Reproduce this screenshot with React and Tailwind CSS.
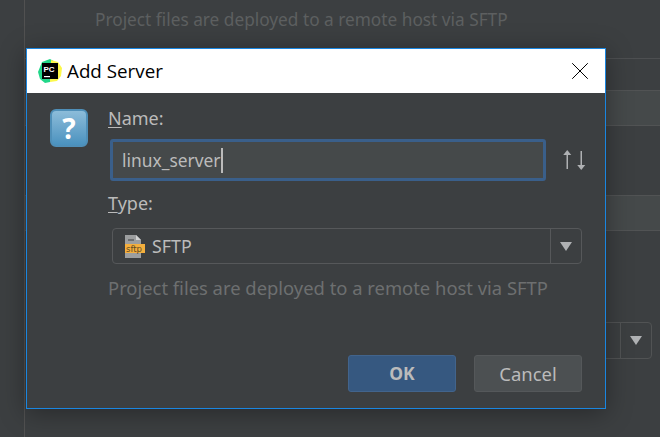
import { X } from 'lucide-react';

const font = { fontFamily: '"Noto Sans", "Open Sans", sans-serif' };

function PcLogo() {
  return (
    <svg width="24" height="24" viewBox="0 0 24 24" className="shrink-0">
      <polygon points="0,13 4,3 12,0 17,3 12,23 7,24 2,20" fill="#21d789" />
      <polygon points="13,1 20,3 24,9 23,17 19,22 12,23" fill="#fcf84a" />
      <rect x="4" y="4" width="16" height="16" fill="#000" />
      <text x="5.5" y="12.5" fontSize="8" fontWeight="700" fill="#fff" style={{ fontFamily: '"Liberation Sans", sans-serif' }}>PC</text>
      <rect x="6" y="17" width="6" height="1.2" fill="#fff" />
    </svg>
  );
}

function SftpIcon() {
  return (
    <svg width="20" height="23" viewBox="0 0 20 23" className="shrink-0">
      <path d="M0 0h11l5 5v18H0z" fill="#9c9e9f" />
      <path d="M11 0l5 5h-5z" fill="#d0d1d1" />
      <rect x="3" y="4" width="6" height="2" fill="#6b6d6e" />
      <rect x="0" y="9" width="20" height="9" fill="#f4af3d" />
      <text x="1" y="16.5" fontSize="8.5" fill="#5e4a25" style={{ fontFamily: '"DejaVu Sans", sans-serif' }}>sftp</text>
    </svg>
  );
}

function SwapArrows() {
  return (
    <svg width="24" height="20" viewBox="0 0 24 20" className="shrink-0" fill="#afb1b3">
      <rect x="3.5" y="3" width="1.5" height="16" />
      <path d="M4.25 0l4 5h-8z" />
      <rect x="17.5" y="1" width="1.5" height="16" />
      <path d="M18.25 20l4-5h-8z" />
    </svg>
  );
}

function Caret() {
  return <span className="w-0 h-0 border-x-[6px] border-x-transparent border-t-[9px] border-t-[#afb1b3]" />;
}

export default function App() {
  return (
    <div className="relative w-[660px] h-[437px] overflow-hidden bg-[#3c3f41] flex text-[#bbbbbb]" style={font}>
      {/* page behind the dialog */}
      <div className="w-[25px] shrink-0 border-r border-[#515151]" />
      <div className="flex-1 relative pt-[8px]">
        <p className="pl-[70px] text-[17.25px] leading-[24px] text-[#5d5f60]">Project files are deployed to a remote host via SFTP</p>
        <div className="mt-[26px] h-px bg-[#4d4f51]" />
        <div className="mt-[31px] h-[36px] bg-[#45494a] border-y border-[#515354]" />
        <div className="mt-[69px] h-[36px] bg-[#45494a] border-y border-[#515354]" />
        <div className="mt-[91px] ml-[560px] mr-[8px] h-[37px] flex justify-end border border-[#515354] rounded-[4px]">
          <div className="w-[31px] border-l border-[#515354] flex items-center justify-center">
            <Caret />
          </div>
        </div>
      </div>

      {/* dialog */}
      <div className="absolute left-[26px] top-[48px] w-[580px] h-[361px] border border-[#1a86e0] bg-[#3c3f41] shadow-[0_4px_24px_rgba(0,0,0,0.35)] flex flex-col">
        <div className="h-[44px] shrink-0 bg-white flex items-center pl-[11px] pr-[10px] text-black">
          <PcLogo />
          <span className="ml-[5px] text-[18.8px] flex-1" style={{ fontFamily: '"Open Sans", sans-serif' }}>Add Server</span>
          <X size={30} strokeWidth={0.8} color="#000" />
        </div>
        <div className="flex-1 flex pl-[23px] pt-[16px] pr-[17px] pb-[16px]">
          <div className="w-[38px] h-[38px] rounded-[6px] bg-gradient-to-b from-[#8cbcd9] to-[#4a92bf] border-2 border-[#4f8fb8] flex items-center justify-center text-white text-[28px] font-bold leading-none shrink-0">?</div>
          <div className="flex-1 ml-[20px] flex flex-col">
            <label className="text-[18px] leading-[24px] -mt-[3px]"><span className="underline underline-offset-2">N</span>ame:</label>
            <div className="flex items-center mt-[9px] ml-[2px]">
              <div className="w-[436px] h-[42px] rounded-[3px] border-[3px] border-[#3a5f8a] bg-[#45494a] flex items-center pl-[9px] text-[17.4px]">
                <span>linux_server</span>
                <span className="w-[2px] h-[25px] bg-[#bbbbbb]" />
              </div>
              <span className="ml-[17px]"><SwapArrows /></span>
            </div>
            <label className="text-[18px] leading-[24px] mt-[10px]"><span className="underline underline-offset-2">T</span>ype:</label>
            <div className="mt-[13px] ml-[4px] h-[36px] w-[470px] flex items-center border border-[#56585a] rounded-[4px]">
              <div className="flex-1 flex items-center pl-[12px] gap-[7px] text-[17.8px]">
                <SftpIcon />
                <span>SFTP</span>
              </div>
              <div className="w-[31px] h-full border-l border-[#56585a] flex items-center justify-center">
                <Caret />
              </div>
            </div>
            <p className="mt-[12px] text-[18.4px] leading-[24px] text-[#6d6f70]">Project files are deployed to a remote host via SFTP</p>
            <div className="mt-auto flex justify-end gap-[18px] pr-[6px]">
              <button className="w-[108px] h-[37px] rounded-[3px] bg-[#365880] border border-[#42648c] font-bold text-[17.5px]">OK</button>
              <button className="w-[108px] h-[37px] rounded-[3px] bg-[#4c5052] border border-[#55585a] text-[18.5px]">Cancel</button>
            </div>
          </div>
        </div>
      </div>
    </div>
  );
}
